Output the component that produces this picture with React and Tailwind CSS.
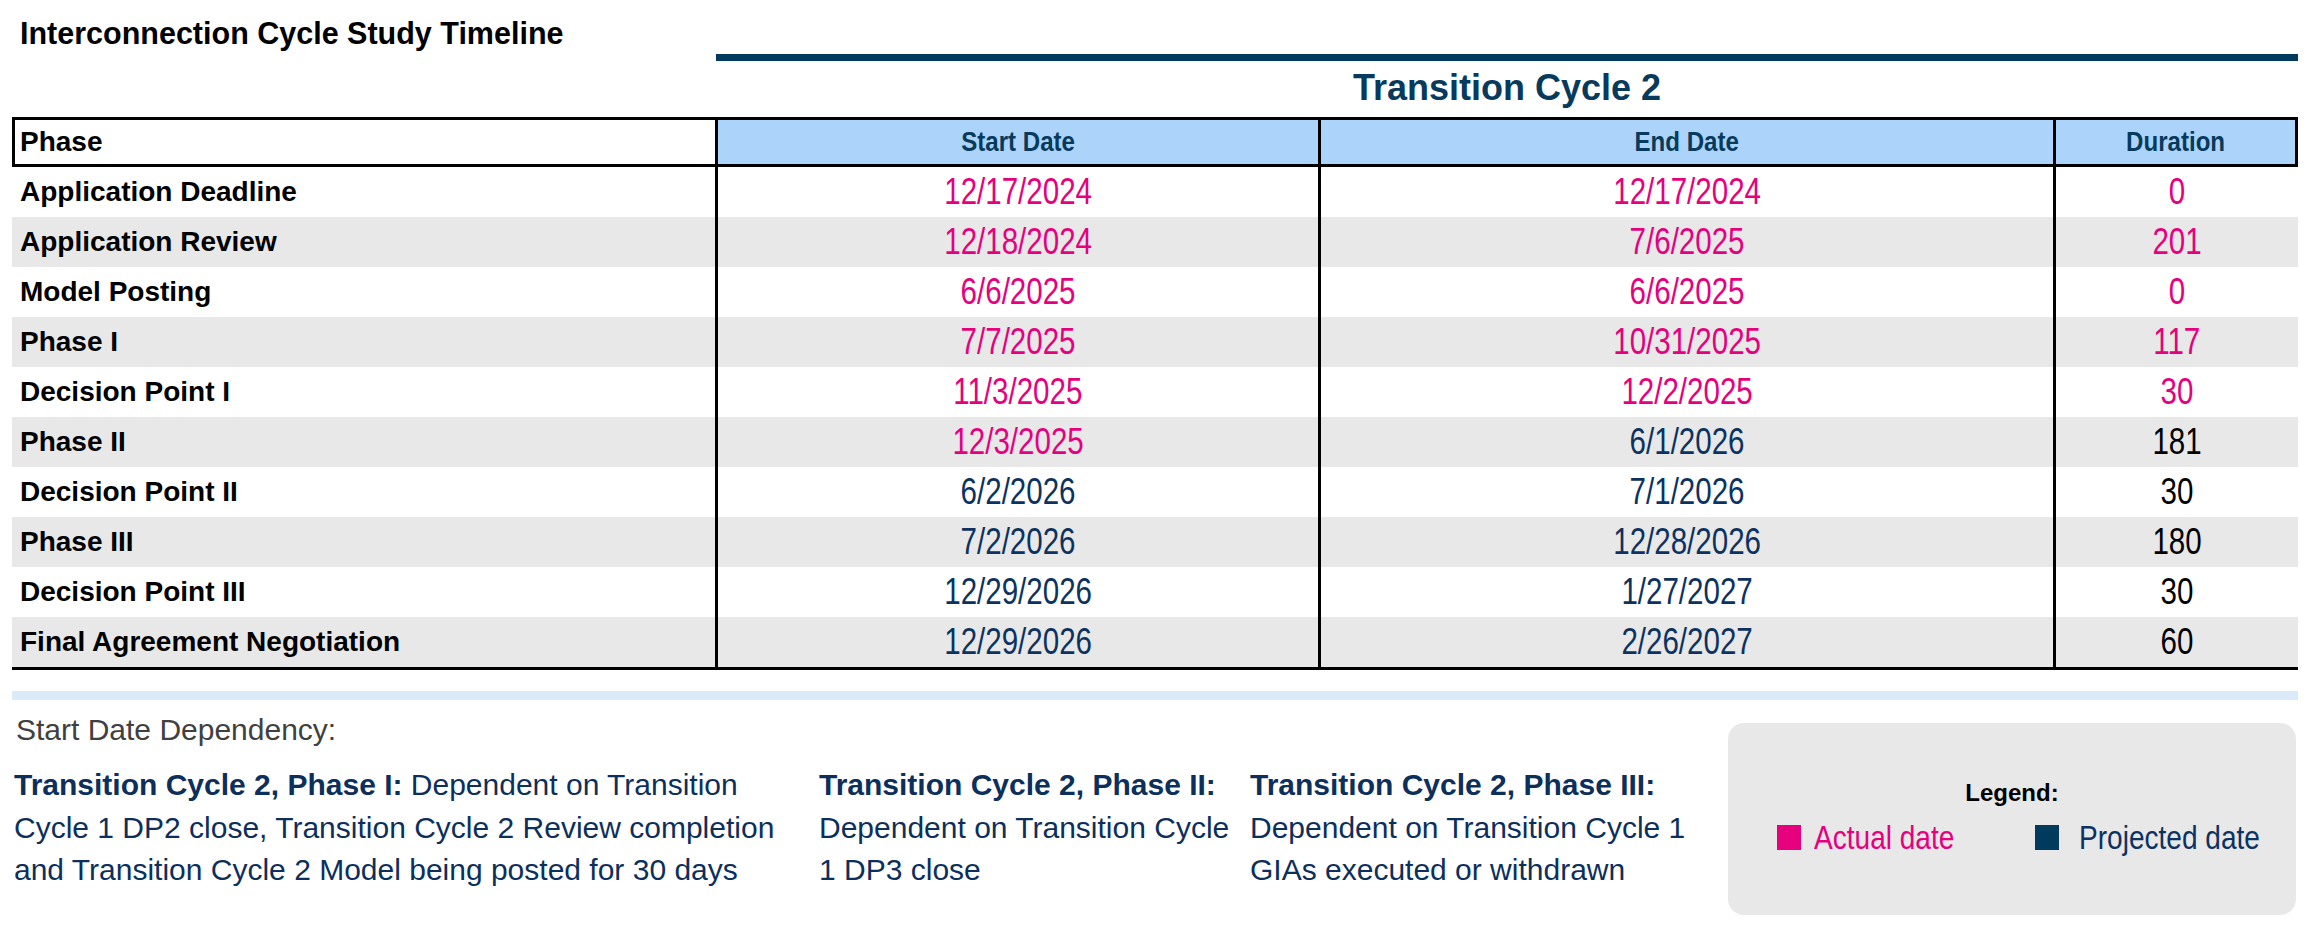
import React from "react";

const PINK = "text-[#e6007e]";
const NAVY = "text-[#0b3260]";
const BLACK = "text-black";

const rows = [
  ["Application Deadline", "12/17/2024", PINK, "12/17/2024", PINK, "0", PINK],
  ["Application Review", "12/18/2024", PINK, "7/6/2025", PINK, "201", PINK],
  ["Model Posting", "6/6/2025", PINK, "6/6/2025", PINK, "0", PINK],
  ["Phase I", "7/7/2025", PINK, "10/31/2025", PINK, "117", PINK],
  ["Decision Point I", "11/3/2025", PINK, "12/2/2025", PINK, "30", PINK],
  ["Phase II", "12/3/2025", PINK, "6/1/2026", NAVY, "181", BLACK],
  ["Decision Point II", "6/2/2026", NAVY, "7/1/2026", NAVY, "30", BLACK],
  ["Phase III", "7/2/2026", NAVY, "12/28/2026", NAVY, "180", BLACK],
  ["Decision Point III", "12/29/2026", NAVY, "1/27/2027", NAVY, "30", BLACK],
  ["Final Agreement Negotiation", "12/29/2026", NAVY, "2/26/2027", NAVY, "60", BLACK],
];

function Narrow({ children, className = "" }) {
  return <span className={`inline-block whitespace-nowrap scale-x-[0.82] ${className}`}>{children}</span>;
}

export default function App() {
  return (
    <div className="w-[2311px] h-[936px] bg-white pl-[12px] font-['Liberation_Sans',Arial,sans-serif] overflow-hidden">
      {/* Top area */}
      <div className="flex h-[117px]">
        <div className="w-[704px] pt-[18px] pl-[8px] text-[30.5px] font-bold leading-none text-black whitespace-nowrap">
          Interconnection Cycle Study Timeline
        </div>
        <div className="w-[1582px] pt-[54px] flex flex-col">
          <div className="h-[7px] bg-[#003a5d]" />
          <div className="mt-[9px] text-center text-[36px] font-bold leading-none text-[#073a5c]">
            Transition Cycle 2
          </div>
        </div>
      </div>

      {/* Table */}
      <div className="w-[2286px] border-b-[3px] border-black">
        <div className="flex h-[50px]">
          <div className="w-[706px] border-[3px] border-black bg-white pl-[5px] flex items-center text-[28px] font-bold leading-none text-black">
            Phase
          </div>
          <div className="w-[603px] border-y-[3px] border-r-[3px] border-black bg-[#acd4fb] flex items-center justify-center text-[28px] font-bold leading-none text-[#073a5c]">
            <span className="inline-block whitespace-nowrap scale-x-[0.86]">Start Date</span>
          </div>
          <div className="w-[735px] border-y-[3px] border-r-[3px] border-black bg-[#acd4fb] flex items-center justify-center text-[28px] font-bold leading-none text-[#073a5c]">
            <span className="inline-block whitespace-nowrap scale-x-[0.86]">End Date</span>
          </div>
          <div className="w-[242px] border-y-[3px] border-r-[3px] border-black bg-[#acd4fb] flex items-center justify-center text-[28px] font-bold leading-none text-[#073a5c]">
            <span className="inline-block whitespace-nowrap scale-x-[0.86]">Duration</span>
          </div>
        </div>
        {rows.map((r, i) => (
          <div key={r[0]} className={`flex h-[50px] ${i % 2 === 1 ? "bg-[#e8e8e8]" : "bg-white"}`}>
            <div className="w-[706px] border-r-[3px] border-black pl-[8px] flex items-center text-[28px] font-bold leading-none text-black whitespace-nowrap">
              {r[0]}
            </div>
            <div className={`w-[603px] border-r-[3px] border-black flex items-center justify-center text-[36px] leading-none ${r[2]}`}>
              <Narrow>{r[1]}</Narrow>
            </div>
            <div className={`w-[735px] border-r-[3px] border-black flex items-center justify-center text-[36px] leading-none ${r[4]}`}>
              <Narrow>{r[3]}</Narrow>
            </div>
            <div className={`w-[242px] flex items-center justify-center text-[36px] leading-none ${r[6]}`}>
              <Narrow>{r[5]}</Narrow>
            </div>
          </div>
        ))}
      </div>

      {/* Light blue separator */}
      <div className="mt-[21px] h-[9px] w-[2286px] bg-[#daeaf9]" />

      {/* Bottom area */}
      <div className="flex">
        <div className="w-[1716px]">
          <div className="mt-[15px] pl-[4px] text-[30px] leading-none text-[#404040] whitespace-nowrap">
            Start Date Dependency:
          </div>
          <div className="mt-[19px] flex text-[30px] leading-[42.5px] text-[#0c2f5c] whitespace-nowrap">
            <div className="w-[807px] pl-[2px]">
              <div><span className="font-bold">Transition Cycle 2, Phase I:</span> Dependent on Transition</div>
              <div>Cycle 1 DP2 close, Transition Cycle 2 Review completion</div>
              <div>and Transition Cycle 2 Model being posted for 30 days</div>
            </div>
            <div className="w-[431px]">
              <div className="font-bold">Transition Cycle 2, Phase II:</div>
              <div>Dependent on Transition Cycle</div>
              <div>1 DP3 close</div>
            </div>
            <div className="flex-1">
              <div className="font-bold">Transition Cycle 2, Phase III:</div>
              <div>Dependent on Transition Cycle 1</div>
              <div>GIAs executed or withdrawn</div>
            </div>
          </div>
        </div>
        <div className="mt-[23px] w-[568px] h-[192px] rounded-[16px] bg-[#e8e8e8] pt-[58px]">
          <div className="text-center text-[24px] font-bold leading-none text-black">Legend:</div>
          <div className="mt-[16px] flex items-center h-[33px] pl-[49px] text-[33px] leading-none">
            <div className="w-[258px] flex items-center">
              <div className="w-[24px] h-[25px] bg-[#e6007e]" />
              <span className="ml-[13px] inline-block whitespace-nowrap origin-left scale-x-[0.85] text-[#e6007e]">Actual date</span>
            </div>
            <div className="flex items-center">
              <div className="w-[24px] h-[25px] bg-[#003a5d]" />
              <span className="ml-[20px] inline-block whitespace-nowrap origin-left scale-x-[0.85] text-[#0b3260]">Projected date</span>
            </div>
          </div>
        </div>
      </div>
    </div>
  );
}
